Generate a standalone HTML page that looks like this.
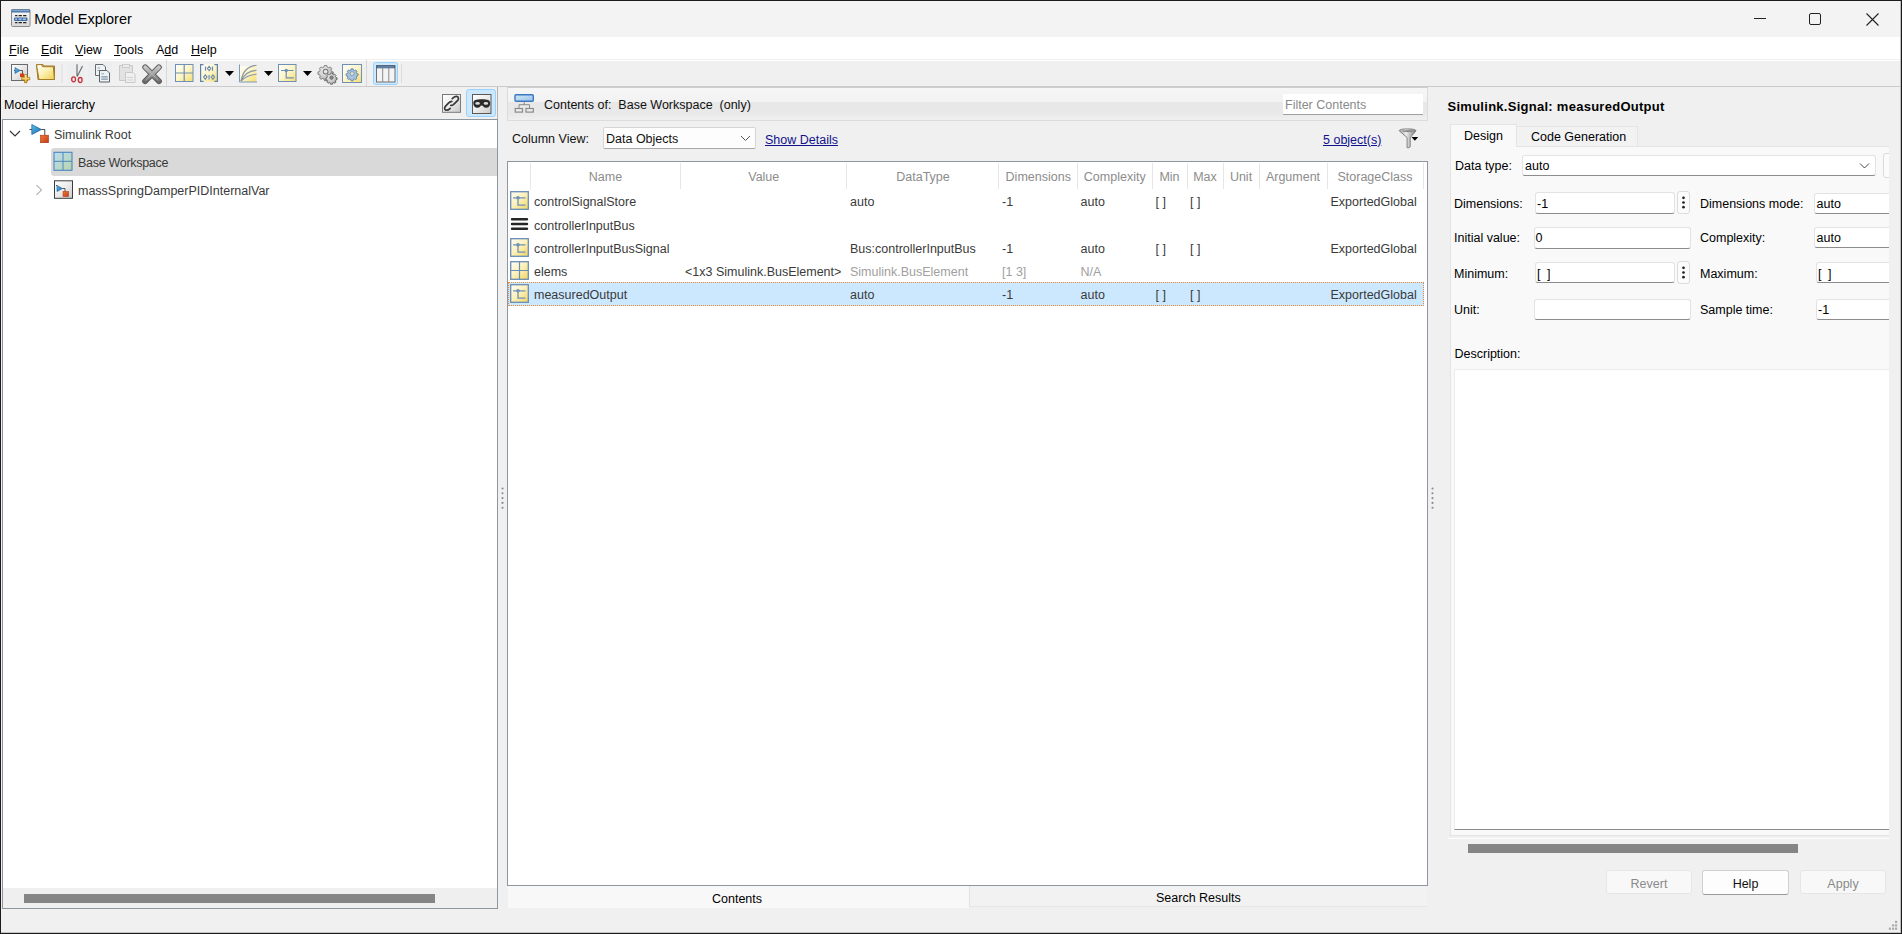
<!DOCTYPE html>
<html><head><meta charset="utf-8">
<style>
*{box-sizing:border-box;margin:0;padding:0}
html,body{width:1902px;height:934px;overflow:hidden;background:#f0f0f0;font-family:"Liberation Sans",sans-serif;font-size:12.5px;color:#000}
.a{position:absolute}
.t{position:absolute;white-space:pre;line-height:16px;font-size:12.5px}
.u{text-decoration:underline;text-underline-offset:1.2px}
.hd{text-align:center;color:#8c8c8c}
.c{color:#3a3a3a}
.g{color:#a0a0a0}
.fld{background:#fff;border:1px solid #e3e3e3;border-bottom:1px solid #8c8c8c;border-radius:3px}
.dbt{background:#fbfbfb;border:1px solid #dcdcdc;border-radius:3px}
.ul{text-decoration:underline;text-underline-offset:0.6px}
svg{position:absolute;overflow:visible}
</style></head><body>
<!-- window frame -->
<div class="a" style="left:0;top:0;width:1902px;height:934px;border:1px solid #1c1c1c"></div>
<div class="a" style="left:1900px;top:1px;width:1px;height:932px;background:#bcbcbc"></div>
<div class="a" style="left:1px;top:932px;width:1900px;height:1px;background:#c4c4c4"></div>
<!-- title bar -->
<div class="a" style="left:1px;top:1px;width:1899px;height:36px;background:#f3f3f3"></div>
<div class="t" style="left:34.3px;top:9.7px;font-size:14.5px;line-height:18px;color:#000">Model Explorer</div>
<svg style="left:11px;top:9px" width="20" height="18" viewBox="0 0 20 18">
<defs><linearGradient id="tg" x1="0" y1="0" x2="0" y2="1"><stop offset="0" stop-color="#fafafa"/><stop offset="1" stop-color="#d8d8d8"/></linearGradient></defs>
<rect x="0.5" y="0.5" width="18.5" height="17" rx="1" fill="url(#tg)" stroke="#8a8a8a"/>
<rect x="0.5" y="0.5" width="18.5" height="3" fill="#4a76a8"/>
<rect x="1.5" y="1.2" width="16.5" height="0.9" fill="#8fb4dc"/>
<g fill="#222"><rect x="4" y="6" width="2.5" height="1.3" rx=".6"/><rect x="7.5" y="6" width="3.5" height="1.3" rx=".6"/><rect x="12" y="6" width="3.5" height="1.3" rx=".6"/>
<rect x="4" y="13" width="2.5" height="1.3" rx=".6"/><rect x="7.5" y="13" width="3.5" height="1.3" rx=".6"/><rect x="12" y="13" width="3.5" height="1.3" rx=".6"/></g>
<rect x="3" y="8.5" width="13.5" height="3.5" rx="1.2" fill="#3b6aa0"/>
<g fill="#a8c4e4"><rect x="4.2" y="9.4" width="1.8" height="1.7"/><rect x="7.6" y="9.4" width="3" height="1.7"/><rect x="11.8" y="9.4" width="3" height="1.7"/></g>
</svg>
<!-- window controls -->
<div class="a" style="left:1754px;top:18px;width:12px;height:1px;background:#222"></div>
<div class="a" style="left:1809px;top:13px;width:12px;height:12px;border:1.3px solid #222;border-radius:2px"></div>
<svg style="left:1866px;top:13px" width="13" height="13" viewBox="0 0 13 13"><path d="M0.5 0.5L12.5 12.5M12.5 0.5L0.5 12.5" stroke="#222" stroke-width="1.1"/></svg>
<!-- menubar -->
<div class="a" style="left:1px;top:37px;width:1899px;height:24px;background:#fff"></div>
<div class="a" style="left:1px;top:59px;width:1899px;height:1px;background:#f0f0f0"></div>
<div class="t" style="left:9px;top:41.5px"><span class="ul">F</span>ile</div>
<div class="t" style="left:41px;top:41.5px"><span class="ul">E</span>dit</div>
<div class="t" style="left:75px;top:41.5px"><span class="ul">V</span>iew</div>
<div class="t" style="left:114px;top:41.5px"><span class="ul">T</span>ools</div>
<div class="t" style="left:156px;top:41.5px">A<span class="ul">d</span>d</div>
<div class="t" style="left:191px;top:41.5px"><span class="ul">H</span>elp</div>
<!-- toolbar icons -->
<svg style="left:0;top:0" width="420" height="90">
<defs>
<linearGradient id="yl" x1="0" y1="0" x2="1" y2="1"><stop offset="0" stop-color="#ffffff"/><stop offset="0.5" stop-color="#fdf5c8"/><stop offset="1" stop-color="#f5dc6e"/></linearGradient>
<linearGradient id="fold" x1="0" y1="0" x2="1" y2="1"><stop offset="0" stop-color="#ffffff"/><stop offset="0.5" stop-color="#fbefb0"/><stop offset="1" stop-color="#efcf4f"/></linearGradient>
<linearGradient id="gw" x1="0" y1="0" x2="1" y2="1"><stop offset="0" stop-color="#ffffff"/><stop offset="1" stop-color="#cfcfcf"/></linearGradient>
<linearGradient id="xg" x1="0" y1="0" x2="0" y2="1"><stop offset="0" stop-color="#c4c4c4"/><stop offset="0.5" stop-color="#8c8c8c"/><stop offset="1" stop-color="#555"/></linearGradient>
<linearGradient id="plus" x1="0" y1="0" x2="0" y2="1"><stop offset="0" stop-color="#fff6c0"/><stop offset="1" stop-color="#e2a81c"/></linearGradient>
<linearGradient id="tri" x1="0" y1="0" x2="1" y2="1"><stop offset="0" stop-color="#6cc4f0"/><stop offset="1" stop-color="#1a6bb0"/></linearGradient>
</defs>
<!-- new model -->
<rect x="11.5" y="64.5" width="16" height="16" fill="url(#gw)" stroke="#6a6a6a" stroke-width="1"/>
<path d="M14 70.5H15.5" stroke="#333" stroke-width="0.8"/>
<path d="M15 67.5L20 70.5L15 73.5Z" fill="url(#tri)" stroke="#1a5f9e" stroke-width="0.6"/>
<path d="M20 70.5H22.5V75" stroke="#333" stroke-width="0.8" fill="none"/>
<rect x="20" y="73.5" width="4" height="3.5" fill="#d2401a"/>
<path d="M24.5 74.5h2.5v2.8h2.8v2.6h-2.8v2.8h-2.5v-2.8h-2.8v-2.6h2.8z" fill="url(#plus)" stroke="#a8740a" stroke-width="0.7"/>
<!-- folder -->
<path d="M36.5 64.5h6.5l1.2 1.5h10.3v13.5h-16.5z" fill="#d8b878" stroke="#a07a2a" stroke-width="1"/>
<path d="M36.5 64.8L39 79.5h15.5l-1.2-12.8H42.5l-1.2-2.2z" fill="url(#fold)" stroke="#a67c26" stroke-width="1"/>
<rect x="61.5" y="64" width="1" height="19" fill="#dedede"/>
<!-- scissors -->
<rect x="67" y="63" width="18" height="21" fill="#eceef0"/>
<path d="M77 64.2V76.5M82.5 66L77.2 76.5" stroke="#6a6a6a" stroke-width="1.1"/>
<ellipse cx="73.6" cy="79.3" rx="1.9" ry="2.5" fill="none" stroke="#c8323a" stroke-width="1.3"/>
<ellipse cx="80.2" cy="80" rx="1.9" ry="2.5" fill="none" stroke="#c8323a" stroke-width="1.3"/>
<!-- copy -->
<rect x="88" y="63" width="24" height="21" fill="#eceef0"/>
<path d="M95.5 64.5h7.5l2.5 2.5v8.5h-10z" fill="#eef3f8" stroke="#6a6a6a" stroke-width="1"/>
<path d="M97.5 68h2.5M97.5 70.5h2" stroke="#8a9aaa" stroke-width="0.9"/>
<path d="M99.5 70.5h7.5l2.5 2.5v9h-10z" fill="#eaf2f8" stroke="#606060" stroke-width="1"/>
<path d="M101.5 73.8h2.5" stroke="#8a9aaa" stroke-width="0.9"/>
<path d="M101.3 76.8h6.5M101.3 79.2h6.5" stroke="#8494a4" stroke-width="1.3"/>
<!-- paste disabled -->
<path d="M119.5 65.5h13v15h-13z" fill="#e2e2e2" stroke="#c8c8c8" stroke-width="1"/>
<rect x="122.5" y="64.5" width="7" height="3" fill="#ececec" stroke="#c4c4c4" stroke-width="0.8"/>
<path d="M125.5 72.5h7.5l2 2v8h-9.5z" fill="#f0f0f0" stroke="#c8c8c8" stroke-width="1"/>
<path d="M127 77.5h6M127 80h6" stroke="#d0d0d0" stroke-width="1"/>
<!-- delete X -->
<defs><linearGradient id="xg2" x1="0" y1="0" x2="0" y2="1"><stop offset="0" stop-color="#c8c8c8"/><stop offset="0.55" stop-color="#9a9a9a"/><stop offset="1" stop-color="#6a6a6a"/></linearGradient></defs>
<path d="M145.2 67.3L159 81.2M158.9 67.3L145.1 81.2" stroke="#5c5c5c" stroke-width="5.8" stroke-linecap="round"/>
<path d="M145.2 67.3L159 81.2M158.9 67.3L145.1 81.2" stroke="url(#xg2)" stroke-width="3.9" stroke-linecap="round"/>
<path d="M146 68L158.2 80.4M158.1 68L145.9 80.4" stroke="#b8b8b8" stroke-width="0.9" stroke-linecap="round" opacity="0.8"/>
<rect x="166" y="60" width="1" height="26" fill="#d8d8d8"/>
<!-- grid -->
<rect x="175.5" y="64.5" width="17.5" height="17" fill="url(#yl)" stroke="#6f8fb3" stroke-width="1"/>
<path d="M184.2 64.5V81.5M175.5 73H193" stroke="#6f8fb3" stroke-width="1.2"/>
<!-- bus brackets -->
<rect x="200.5" y="64.2" width="17.5" height="17.5" fill="url(#yl)"/>
<path d="M203.6 64.6h-3v16.8h3M214.4 64.6h3v16.8h-3" stroke="#5f82ad" stroke-width="1.2" fill="none"/>
<g stroke="#6a8cb4" fill="none"><path d="M205.5 66.5v4.2M212.5 66.5v4.2M209.1 75v4.6" stroke-width="1.2"/>
<path d="M209.1 66.3l1.7 2.2-1.7 2.2-1.7-2.2z" stroke-width="1.1"/>
<path d="M205.3 74.9l1.7 2.2-1.7 2.2-1.7-2.2z" stroke-width="1.1"/>
<path d="M212.9 74.9l1.7 2.2-1.7 2.2-1.7-2.2z" stroke-width="1.1"/></g>
<path d="M225 71h9l-4.5 5z" fill="#000"/>
<!-- curves -->
<rect x="239.5" y="64.5" width="17" height="17.5" fill="url(#yl)"/>
<rect x="239" y="64" width="18" height="2" fill="#f0f0f0"/>
<path d="M239.5 64.5V82H257" stroke="#7a9ab8" stroke-width="1" fill="none"/>
<g fill="none" stroke="#8596a8" stroke-width="1.15"><path d="M241 81C242.5 72 248 66 256.5 65.3"/><path d="M241 81C243.5 75 249 70.8 256.5 70.3"/><path d="M241 81C244.5 77.5 250 74.6 256.5 74.2"/></g>
<path d="M264 71h9l-4.5 5z" fill="#000"/>
<!-- signal -->
<rect x="278.5" y="64.5" width="17.5" height="17" fill="url(#yl)" stroke="#6f8fb3" stroke-width="1"/>
<path d="M281 70.5h12.5M286.2 70.5v7.3h7.5" stroke="#6f8fb3" stroke-width="1.2" fill="none"/>
<circle cx="286.2" cy="70.5" r="1.7" fill="#6f8fb3"/>
<path d="M303 71h9l-4.5 5z" fill="#000"/>
<!-- gears -->
<defs><radialGradient id="gg" cx="0.4" cy="0.35" r="0.7"><stop offset="0" stop-color="#f4f4f4"/><stop offset="0.6" stop-color="#c8c8c8"/><stop offset="1" stop-color="#8a8a8a"/></radialGradient></defs>
<g transform="translate(325.6,71.6) scale(0.9)"><path d="M-1.3 -6.8h2.6l.5 1.8 1.6.7 1.7-.9 1.8 1.8-.9 1.7.7 1.6 1.8.5v2.6l-1.8.5-.7 1.6.9 1.7-1.8 1.8-1.7-.9-1.6.7-.5 1.8h-2.6l-.5-1.8-1.6-.7-1.7.9-1.8-1.8.9-1.7-.7-1.6-1.8-.5v-2.6l1.8-.5.7-1.6-.9-1.7 1.8-1.8 1.7.9 1.6-.7z" fill="url(#gg)" stroke="#6a6a6a" stroke-width="0.8"/><circle r="2.7" fill="#d8d8d8" stroke="#777" stroke-width="1.2"/><circle r="1.3" fill="#f0f0f0"/></g>
<g transform="translate(331.5,77.6) scale(0.66)"><path d="M-1.3 -6.8h2.6l.5 1.8 1.6.7 1.7-.9 1.8 1.8-.9 1.7.7 1.6 1.8.5v2.6l-1.8.5-.7 1.6.9 1.7-1.8 1.8-1.7-.9-1.6.7-.5 1.8h-2.6l-.5-1.8-1.6-.7-1.7.9-1.8-1.8.9-1.7-.7-1.6-1.8-.5v-2.6l1.8-.5.7-1.6-.9-1.7 1.8-1.8 1.7.9 1.6-.7z" fill="url(#gg)" stroke="#4a4a4a" stroke-width="1"/><circle r="2.6" fill="#9a9a9a" stroke="#555" stroke-width="1.2"/><circle r="1.2" fill="#7a7a7a"/></g>
<!-- gear yellow -->
<rect x="342.5" y="64.5" width="19" height="18" fill="url(#yl)" stroke="#6f8fb3" stroke-width="1"/>
<g transform="translate(352.1,73.6) scale(0.7)"><path d="M-1.3 -6.8h2.6l.5 1.8 1.6.7 1.7-.9 1.8 1.8-.9 1.7.7 1.6 1.8.5v2.6l-1.8.5-.7 1.6.9 1.7-1.8 1.8-1.7-.9-1.6.7-.5 1.8h-2.6l-.5-1.8-1.6-.7-1.7.9-1.8-1.8.9-1.7-.7-1.6-1.8-.5v-2.6l1.8-.5.7-1.6-.9-1.7 1.8-1.8 1.7.9 1.6-.7z" fill="#a9c2de" stroke="#5a80ae" stroke-width="1.3"/><circle r="2.9" fill="#c8d8ea" stroke="#6d8fb8" stroke-width="1"/><circle r="1.5" fill="#f3e27a"/></g>
<rect x="366" y="60" width="1" height="26" fill="#d8d8d8"/>
<!-- columns pressed -->
<rect x="373.5" y="62.5" width="24" height="22" rx="2" fill="#cce8ff" stroke="#99d1ff" stroke-width="1"/>
<rect x="376.5" y="65.5" width="18.5" height="16.5" fill="#f4f4f4" stroke="#707070" stroke-width="1"/>
<rect x="376.5" y="65.5" width="18.5" height="2.8" fill="#3f5f82"/><rect x="377.5" y="66.6" width="16.5" height="0.8" fill="#8fb0d0"/>
<path d="M382.7 68v14M388.8 68v14" stroke="#8a8a8a" stroke-width="1"/>
<rect x="401" y="64" width="1" height="19" fill="#dcdcdc"/>
</svg>
<!-- toolbar line -->
<div class="a" style="left:1px;top:86px;width:1899px;height:1px;background:#cbcbcb"></div>

<!-- LEFT PANEL -->
<div class="t" style="left:4px;top:96.5px">Model Hierarchy</div>
<div class="a" style="left:497px;top:87px;width:1px;height:32px;background:#b4b4b4"></div>
<div class="a" style="left:2px;top:119px;width:496px;height:790px;border:1px solid #8e96a0;background:#fff"></div>
<div class="a" style="left:3px;top:888px;width:494px;height:20px;background:#efefef"></div>
<div class="a" style="left:24px;top:894px;width:411px;height:9px;background:#858585"></div>
<div class="a" style="left:51px;top:148px;width:446px;height:28px;background:#d9d9d9;border-radius:3px 0 0 3px"></div>
<div class="t" style="left:54px;top:126.5px;color:#3a3a3a">Simulink Root</div>
<div class="t" style="left:78px;top:154.5px;color:#3a3a3a;letter-spacing:-0.3px">Base Workspace</div>
<div class="t" style="left:78px;top:182.5px;color:#3a3a3a">massSpringDamperPIDInternalVar</div>


<!-- header buttons -->
<svg style="left:0;top:0" width="500" height="210">
<defs>
<linearGradient id="lk" x1="0" y1="0" x2="1" y2="1"><stop offset="0" stop-color="#ffffff"/><stop offset="0.5" stop-color="#ececec"/><stop offset="1" stop-color="#c8c8c8"/></linearGradient>
<linearGradient id="bw" x1="0" y1="0" x2="1" y2="1"><stop offset="0" stop-color="#bcdcf4"/><stop offset="1" stop-color="#b6d4a8"/></linearGradient>
<linearGradient id="tri2" x1="0" y1="0" x2="1" y2="1"><stop offset="0" stop-color="#5ec0ee"/><stop offset="1" stop-color="#1665a8"/></linearGradient>
<linearGradient id="rs" x1="0" y1="0" x2="1" y2="1"><stop offset="0" stop-color="#f07a3a"/><stop offset="1" stop-color="#c23a12"/></linearGradient>
</defs>
<rect x="442.5" y="94.5" width="18" height="17.8" fill="url(#lk)" stroke="#7a7a7a" stroke-width="1"/>
<g fill="none" stroke="#383838" stroke-width="1.7" stroke-linecap="round">
<path d="M452.3 98.6C453.5 97.2 455.3 96.2 456.7 96.4C458.7 96.8 459 99 457.5 100.7L453.4 104.6C452.4 105.4 451.4 105.6 450.8 105.3"/>
<path d="M451.8 101.3C450.7 101.4 449.6 102 448.7 102.9L445.6 106.2C444.1 107.8 444.3 109.6 445.8 110.1C447.1 110.5 448.8 109.7 450.2 108.3"/>
</g>
<rect x="466.5" y="89.5" width="29" height="27" rx="2.5" fill="#cce8ff" stroke="#99d1ff" stroke-width="1"/>
<rect x="472.5" y="94.5" width="18.5" height="19" fill="url(#lk)" stroke="#5a5a5a" stroke-width="1"/>
<path d="M473.3 103C473.3 100.2 476 99.3 481.7 99.3C487.5 99.3 490.2 100.2 490.2 103C490.2 106.5 488.2 107.8 485.9 107.8C483.8 107.8 483.1 105.4 481.7 105.4C480.4 105.4 479.7 107.8 477.6 107.8C475.4 107.8 473.3 106.5 473.3 103Z" fill="#2a2a2a"/>
<ellipse cx="477.6" cy="103.4" rx="2.3" ry="1.35" fill="#dcdcdc"/><ellipse cx="485.9" cy="103.4" rx="2.3" ry="1.35" fill="#dcdcdc"/>
<!-- tree -->
<path d="M10 131l5 5 5-5" fill="none" stroke="#333" stroke-width="1.1"/>
<path d="M29.5 129.5h2.5" stroke="#333" stroke-width="0.9"/>
<path d="M31.8 124.5L41.5 129.5L31.8 134.5Z" fill="url(#tri2)" stroke="#1a5c9a" stroke-width="0.7"/>
<path d="M41.5 129.5h3.3v6" stroke="#333" stroke-width="0.9" fill="none"/>
<rect x="40.5" y="135.2" width="8" height="7.5" fill="url(#rs)" stroke="#a8300c" stroke-width="0.6"/>
<rect x="54" y="152.3" width="18" height="18" fill="url(#bw)" stroke="#4c86c0" stroke-width="1.1"/>
<path d="M63 152.3v18M54 161.3h18" stroke="#4c86c0" stroke-width="1"/>
<path d="M36.5 185l5 5-5 5" fill="none" stroke="#8a8a8a" stroke-width="1"/>
<rect x="54.5" y="180.8" width="18" height="17.5" fill="url(#lk)" stroke="#3c3c3c" stroke-width="1"/>
<path d="M57 185.5L62.5 188.5L57 191.5Z" fill="url(#tri2)" stroke="#1a5c9a" stroke-width="0.6"/>
<path d="M56 185.5h1M62.5 188.5h2.5v4" stroke="#333" stroke-width="0.8" fill="none"/>
<rect x="63" y="191.5" width="5.5" height="5" fill="url(#rs)" stroke="#a8300c" stroke-width="0.5"/>
</svg>

<!-- CENTER PANEL -->
<div class="a" style="left:507px;top:87px;width:921px;height:34px;border:1px solid #dcdcdc;border-top-color:#cdcdcd;background:linear-gradient(#f6f6f6 0,#f2f2f2 14.5px,#e8e8e8 14.5px,#e9e9e9 26px,#efefef 31px)"></div>
<div class="t" style="left:544px;top:96.9px;color:#111">Contents of:  Base Workspace  (only)</div>
<div class="a" style="left:1283px;top:94px;width:140px;height:21px;background:#fff;border-bottom:1px solid #a0a0a0"></div>
<div class="t" style="left:1285px;top:97px;color:#8a8a8a">Filter Contents</div>
<div class="t" style="left:512px;top:131px;color:#111">Column View:</div>
<div class="a" style="left:603px;top:127px;width:153px;height:22px;background:#fdfdfd;border:1px solid #d5d5d5;border-bottom-color:#a8a8a8;border-radius:2px"></div>
<div class="t" style="left:606px;top:131px;color:#111">Data Objects</div>
<div class="t u" style="left:765px;top:131.5px;color:#12128c">Show Details</div>
<div class="t u" style="left:1323px;top:131.5px;color:#12128c">5 object(s)</div>

<!-- table -->
<div class="a" style="left:507px;top:161px;width:921px;height:725px;border:1px solid #8e96a0;background:#fff"></div>

<svg style="left:0;top:0" width="1440" height="320">
<defs>
<linearGradient id="cb" x1="0" y1="0" x2="1" y2="1"><stop offset="0" stop-color="#cdeaf8"/><stop offset="1" stop-color="#9cc0ea"/></linearGradient>
<linearGradient id="ys" x1="0" y1="0" x2="1" y2="1"><stop offset="0" stop-color="#fffefa"/><stop offset="0.5" stop-color="#fcf0b8"/><stop offset="1" stop-color="#f3d560"/></linearGradient>
<linearGradient id="fn" x1="0" y1="0" x2="1" y2="0"><stop offset="0" stop-color="#9a9a9a"/><stop offset="0.4" stop-color="#eeeeee"/><stop offset="1" stop-color="#7a7a7a"/></linearGradient>
<symbol id="sig" viewBox="0 0 19 19"><rect x="0.7" y="0.7" width="17.6" height="17.6" fill="url(#ys)" stroke="#6a8db4" stroke-width="1.3"/><path d="M3 6.8h12.5M8 6.8v7.4h7.5" stroke="#6f92b8" stroke-width="1.3" fill="none"/><circle cx="8" cy="6.8" r="1.8" fill="#6f92b8"/></symbol>
<symbol id="grd" viewBox="0 0 19 19"><rect x="0.7" y="0.7" width="17.6" height="17.6" fill="url(#ys)" stroke="#6a8db4" stroke-width="1.3"/><path d="M9.5 0.7v17.6M0.7 9.5h17.6" stroke="#6a8db4" stroke-width="1.2"/></symbol>
</defs>
<!-- contents icon -->
<rect x="515" y="94.8" width="18.3" height="6.5" rx="1" fill="url(#cb)" stroke="#3a78c0" stroke-width="1.4"/>
<path d="M524.2 101.5v3.2M519 104.7h10.5M519 104.7v3.3M529.5 104.7v3.3" stroke="#8a8a8a" stroke-width="1" fill="none"/>
<rect x="515.2" y="108.5" width="7.3" height="3.6" fill="#ececec" stroke="#8a8a8a" stroke-width="1.2"/>
<rect x="526" y="108.5" width="7.3" height="3.6" fill="#ececec" stroke="#8a8a8a" stroke-width="1.2"/>
<!-- combo chevron -->
<path d="M741 136l4.5 4.5 4.5-4.5" fill="none" stroke="#555" stroke-width="1"/>
<!-- filter -->
<path d="M1399.2 130.8c0-1.3 3.8-1.9 8.4-1.9s8.4.6 8.4 1.9l-5.8 6.8v9.2l-1.3.9h-1.8v-10.1z" fill="url(#fn)" stroke="#777" stroke-width="0.9"/>
<ellipse cx="1407.6" cy="131.1" rx="5.3" ry="0.9" fill="#808080"/>
<path d="M1411.5 137h6.7l-3.35 3.8z" fill="#000"/>
</svg>
<!-- table header separators -->
<div class="a" style="left:530px;top:163px;width:1px;height:26px;background:#e6e6e6"></div>
<div class="a" style="left:680px;top:163px;width:1px;height:26px;background:#e6e6e6"></div>
<div class="a" style="left:846px;top:163px;width:1px;height:26px;background:#e6e6e6"></div>
<div class="a" style="left:998px;top:163px;width:1px;height:26px;background:#e6e6e6"></div>
<div class="a" style="left:1077px;top:163px;width:1px;height:26px;background:#e6e6e6"></div>
<div class="a" style="left:1152px;top:163px;width:1px;height:26px;background:#e6e6e6"></div>
<div class="a" style="left:1187px;top:163px;width:1px;height:26px;background:#e6e6e6"></div>
<div class="a" style="left:1223px;top:163px;width:1px;height:26px;background:#e6e6e6"></div>
<div class="a" style="left:1259px;top:163px;width:1px;height:26px;background:#e6e6e6"></div>
<div class="a" style="left:1327px;top:163px;width:1px;height:26px;background:#e6e6e6"></div>
<div class="a" style="left:1423px;top:163px;width:1px;height:26px;background:#e6e6e6"></div>
<div class="t hd" style="left:530.5px;width:150px;top:168.5px">Name</div>
<div class="t hd" style="left:680.5px;width:166.5px;top:168.5px">Value</div>
<div class="t hd" style="left:847px;width:152px;top:168.5px">DataType</div>
<div class="t hd" style="left:999px;width:78.5px;top:168.5px">Dimensions</div>
<div class="t hd" style="left:1077.5px;width:74.5px;top:168.5px">Complexity</div>
<div class="t hd" style="left:1152px;width:35px;top:168.5px">Min</div>
<div class="t hd" style="left:1187px;width:36px;top:168.5px">Max</div>
<div class="t hd" style="left:1223px;width:36px;top:168.5px">Unit</div>
<div class="t hd" style="left:1259px;width:68px;top:168.5px">Argument</div>
<div class="t hd" style="left:1327px;width:96px;top:168.5px">StorageClass</div>
<!-- selected row -->
<div class="a" style="left:508px;top:282px;width:916px;height:24px;background:#cce8ff;border:1px dotted #f08a30"></div>
<!-- row icons -->
<svg style="left:510px;top:191px" width="19" height="19"><use href="#sig"/></svg>
<svg style="left:510px;top:214px" width="19" height="19"><path d="M2 5.3h15M2 10h15M2 14.7h15" stroke="#262626" stroke-width="2.4" stroke-linecap="round"/></svg>
<svg style="left:510px;top:237.5px" width="19" height="19"><use href="#sig"/></svg>
<svg style="left:510px;top:260.7px" width="19" height="19"><use href="#grd"/></svg>
<svg style="left:510px;top:284px" width="19" height="19"><use href="#sig"/></svg>
<!-- row 1 -->
<div class="t c" style="left:534px;top:194.2px">controlSignalStore</div>
<div class="t c" style="left:850px;top:194.2px">auto</div>
<div class="t c" style="left:1002px;top:194.2px">-1</div>
<div class="t c" style="left:1080.5px;top:194.2px">auto</div>
<div class="t c" style="left:1155.5px;top:194.2px">[ ]</div>
<div class="t c" style="left:1190px;top:194.2px">[ ]</div>
<div class="t c" style="left:1330.5px;top:194.2px">ExportedGlobal</div>
<!-- row 2 -->
<div class="t c" style="left:534px;top:217.5px">controllerInputBus</div>
<!-- row 3 -->
<div class="t c" style="left:534px;top:240.8px">controllerInputBusSignal</div>
<div class="t c" style="left:850px;top:240.8px">Bus:controllerInputBus</div>
<div class="t c" style="left:1002px;top:240.8px">-1</div>
<div class="t c" style="left:1080.5px;top:240.8px">auto</div>
<div class="t c" style="left:1155.5px;top:240.8px">[ ]</div>
<div class="t c" style="left:1190px;top:240.8px">[ ]</div>
<div class="t c" style="left:1330.5px;top:240.8px">ExportedGlobal</div>
<!-- row 4 -->
<div class="t c" style="left:534px;top:264px">elems</div>
<div class="t c" style="left:685px;top:264px">&lt;1x3 Simulink.BusElement&gt;</div>
<div class="t g" style="left:850px;top:264px">Simulink.BusElement</div>
<div class="t g" style="left:1002px;top:264px">[1 3]</div>
<div class="t g" style="left:1080.5px;top:264px">N/A</div>
<!-- row 5 -->
<div class="t c" style="left:534px;top:287.2px">measuredOutput</div>
<div class="t c" style="left:850px;top:287.2px">auto</div>
<div class="t c" style="left:1002px;top:287.2px">-1</div>
<div class="t c" style="left:1080.5px;top:287.2px">auto</div>
<div class="t c" style="left:1155.5px;top:287.2px">[ ]</div>
<div class="t c" style="left:1190px;top:287.2px">[ ]</div>
<div class="t c" style="left:1330.5px;top:287.2px">ExportedGlobal</div>

<!-- bottom tabs -->
<div class="a" style="left:508px;top:886px;width:461px;height:22px;background:#f8f8f8"></div>
<div class="a" style="left:969px;top:886px;width:458px;height:21px;background:#f2f2f2;border-left:1px solid #e2e2e2;border-bottom:1px solid #e6e6e6"></div>
<div class="t" style="left:712px;top:891px;color:#000">Contents</div>
<div class="t" style="left:1156px;top:890px;color:#000">Search Results</div>

<!-- RIGHT PANEL -->
<div class="t" style="left:1447.5px;top:99.2px;font-weight:bold;font-size:13px;letter-spacing:0.27px;color:#000">Simulink.Signal: measuredOutput</div>
<div class="a" style="left:1450px;top:146px;width:439px;height:690px;background:#f9f9f9;border:1px solid #e4e4e4;border-right:none"></div>
<div class="a" style="left:1450px;top:124px;width:67px;height:23px;background:#f9f9f9;border:1px solid #e4e4e4;border-bottom:none"></div>
<div class="a" style="left:1517px;top:126px;width:121px;height:20px;background:#f2f2f2;border:1px solid #e6e6e6;border-left:none;border-bottom:none"></div>
<div class="t" style="left:1464px;top:128px;color:#000">Design</div>
<div class="t" style="left:1531px;top:129px;color:#000">Code Generation</div>


<!-- pane content -->
<div class="a" style="left:1450px;top:146px;width:439px;height:690px;overflow:hidden">
</div>
<div class="t" style="left:1455px;top:157.7px">Data type:</div>
<div class="a fld" style="left:1522px;top:155px;width:354px;height:21px"></div>
<div class="t" style="left:1525px;top:157.7px">auto</div>
<svg style="left:1859px;top:162px" width="12" height="8"><path d="M1 1.5l4.5 4.5 4.5-4.5" fill="none" stroke="#444" stroke-width="1"/></svg>
<div class="a" style="left:1883px;top:153px;width:6px;height:25px;overflow:hidden"><div class="a" style="left:0;top:0;width:14px;height:25px;border:1px solid #dadada;border-radius:3px;background:#fbfbfb"></div></div>

<div class="t" style="left:1454px;top:195.9px">Dimensions:</div>
<div class="a fld" style="left:1535px;top:192px;width:140px;height:22px"></div>
<div class="t" style="left:1537px;top:195.9px">-1</div>
<div class="a dbt" style="left:1677px;top:191px;width:13px;height:23px"></div>
<svg style="left:1677px;top:191px" width="13" height="23"><g fill="#222"><circle cx="6.5" cy="6.8" r="1.35"/><circle cx="6.5" cy="11.5" r="1.35"/><circle cx="6.5" cy="16.2" r="1.35"/></g></svg>
<div class="t" style="left:1700px;top:195.9px">Dimensions mode:</div>
<div class="a" style="left:1814px;top:193px;width:75px;height:21px;overflow:hidden"><div class="a fld" style="left:0;top:0;width:100px;height:21px"></div></div>
<div class="t" style="left:1816.5px;top:195.9px">auto</div>

<div class="t" style="left:1454px;top:230.4px">Initial value:</div>
<div class="a fld" style="left:1534px;top:227px;width:157px;height:22px"></div>
<div class="t" style="left:1535.5px;top:230.4px">0</div>
<div class="t" style="left:1700px;top:230.4px">Complexity:</div>
<div class="a" style="left:1814px;top:227px;width:75px;height:21px;overflow:hidden"><div class="a fld" style="left:0;top:0;width:100px;height:21px"></div></div>
<div class="t" style="left:1816.5px;top:230.4px">auto</div>

<div class="t" style="left:1454px;top:265.6px">Minimum:</div>
<div class="a fld" style="left:1535px;top:262px;width:140px;height:21px"></div>
<div class="t" style="left:1537px;top:265.6px;letter-spacing:1.5px">[ ]</div>
<div class="a dbt" style="left:1677px;top:261px;width:13px;height:23px"></div>
<svg style="left:1677px;top:261px" width="13" height="23"><g fill="#222"><circle cx="6.5" cy="6.8" r="1.35"/><circle cx="6.5" cy="11.5" r="1.35"/><circle cx="6.5" cy="16.2" r="1.35"/></g></svg>
<div class="t" style="left:1700px;top:265.6px">Maximum:</div>
<div class="a" style="left:1816px;top:262px;width:73px;height:21px;overflow:hidden"><div class="a fld" style="left:0;top:0;width:100px;height:21px"></div></div>
<div class="t" style="left:1818px;top:265.6px;letter-spacing:1.5px">[ ]</div>

<div class="t" style="left:1454px;top:301.9px">Unit:</div>
<div class="a fld" style="left:1534px;top:299px;width:157px;height:21px"></div>
<div class="t" style="left:1700px;top:301.9px">Sample time:</div>
<div class="a" style="left:1816px;top:299px;width:73px;height:21px;overflow:hidden"><div class="a fld" style="left:0;top:0;width:100px;height:21px"></div></div>
<div class="t" style="left:1818px;top:301.9px">-1</div>

<div class="t" style="left:1454.5px;top:346.3px">Description:</div>
<div class="a" style="left:1454px;top:369px;width:435px;height:461px;background:#fff;border-left:1px solid #ececec;border-top:1px solid #ececec;border-bottom:1px solid #8a8a8a"></div>
<div class="a" style="left:1448px;top:838px;width:441px;height:1px;background:#fdfdfd"></div>
<div class="a" style="left:1468px;top:844px;width:330px;height:9px;background:#858585"></div>

<!-- buttons -->
<div class="a" style="left:1606px;top:870px;width:86px;height:24px;background:#f8f8f8;border:1px solid #e6e6e6;border-radius:3px"></div>
<div class="t" style="left:1606px;width:86px;text-align:center;top:875.7px;color:#8a8a8a">Revert</div>
<div class="a" style="left:1702px;top:870px;width:87px;height:25px;background:#fdfdfd;border:1px solid #d0d0d0;border-bottom-color:#9a9a9a;border-radius:3px"></div>
<div class="t" style="left:1702px;width:87px;text-align:center;top:875.7px;color:#111">Help</div>
<div class="a" style="left:1800px;top:870px;width:86px;height:24px;background:#f8f8f8;border:1px solid #e6e6e6;border-radius:3px"></div>
<div class="t" style="left:1800px;width:86px;text-align:center;top:875.7px;color:#8a8a8a">Apply</div>
<!-- resize grip -->
<svg style="left:1888px;top:920px" width="12" height="12"><g fill="#ababab"><rect x="7" y="0.8" width="2.2" height="2.2"/><rect x="4" y="4.3" width="2.2" height="2.2"/><rect x="7" y="4.3" width="2.2" height="2.2"/><rect x="0.8" y="7.6" width="2.2" height="2.2"/><rect x="4" y="7.6" width="2.2" height="2.2"/><rect x="7" y="7.6" width="2.2" height="2.2"/></g></svg>

<!-- splitter dots -->
<svg style="left:500px;top:486px" width="6" height="26"><g fill="#8a8a8a"><circle cx="2.5" cy="2.5" r="1.05"/><circle cx="2.5" cy="7.3" r="1.05"/><circle cx="2.5" cy="12.1" r="1.05"/><circle cx="2.5" cy="16.9" r="1.05"/><circle cx="2.5" cy="21.7" r="1.05"/></g></svg>
<svg style="left:1430px;top:486px" width="6" height="26"><g fill="#8a8a8a"><circle cx="2.5" cy="2.5" r="1.05"/><circle cx="2.5" cy="7.3" r="1.05"/><circle cx="2.5" cy="12.1" r="1.05"/><circle cx="2.5" cy="16.9" r="1.05"/><circle cx="2.5" cy="21.7" r="1.05"/></g></svg>

</body></html>
